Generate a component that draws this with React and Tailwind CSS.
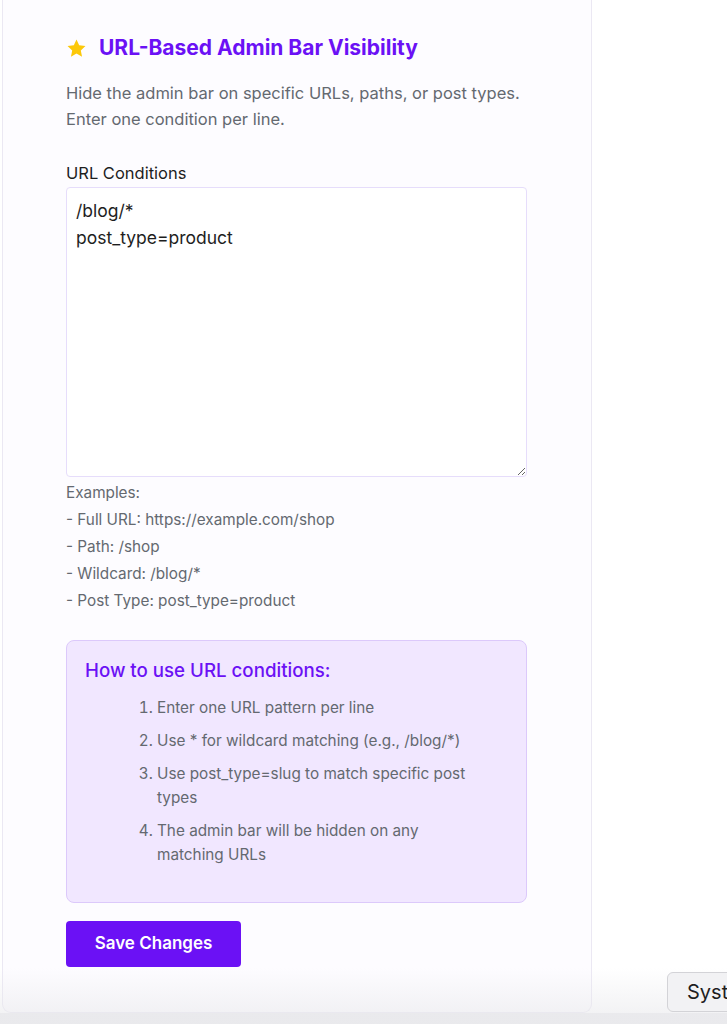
import React from 'react';

const Star = () => (
  <svg viewBox="0 0 24 24" className="w-[21px] h-[21px]">
    <path
      d="M12 1.8l3.05 6.6 7.2.85-5.33 4.93 1.42 7.12L12 17.7l-6.34 3.6 1.42-7.12L1.75 9.25l7.2-.85z"
      fill="#fcc80a"
    />
  </svg>
);

const examples = [
  'Examples:',
  '- Full URL: https://example.com/shop',
  '- Path: /shop',
  '- Wildcard: /blog/*',
  '- Post Type: post_type=product',
];

const steps = [
  'Enter one URL pattern per line',
  'Use * for wildcard matching (e.g., /blog/*)',
  'Use post_type=slug to match specific post types',
  'The admin bar will be hidden on any matching URLs',
];

const App = () => {
  return (
    <div className="relative w-[727px] h-[1024px] overflow-hidden bg-white font-['Inter',sans-serif]">
      <div className="flex h-[1013px]">
        <div className="ml-[2px] w-[590px] bg-[#fdfcff] border-x border-b border-[#ebe8f3] rounded-b-[9px] pl-[63px] pt-[34px]">
          <div className="w-[461px]">
            <h2 className="flex items-center gap-[12px] text-[21px] leading-[28px] font-bold text-[#6b11f5]">
              <Star />
              URL-Based Admin Bar Visibility
            </h2>

            <p className="mt-[18px] text-[16.5px] leading-[26px] text-[#646970]">
              Hide the admin bar on specific URLs, paths, or post types. Enter one condition per line.
            </p>

            <label className="block mt-[30px] text-[16.5px] leading-[22px] text-[#1e1e1e]">
              URL Conditions
            </label>

            <textarea
              className="block mt-[3px] w-full h-[290px] border border-[#e6ddfb] rounded-[4px] bg-white px-[9px] py-[9px] text-[17.5px] leading-[27px] text-[#1e1e1e] outline-none resize-y"
              defaultValue={'/blog/*\npost_type=product'}
            />

            <div className="mt-[2px] text-[15.3px] leading-[27px] text-[#646970]">
              {examples.map((line) => (
                <div key={line}>{line}</div>
              ))}
            </div>

            <div className="mt-[26px] h-[263px] bg-[#f1e7ff] border border-[#dcc9fb] rounded-[8px] px-[18px] pt-[18px]">
              <h3 className="text-[18.7px] leading-[24px] font-medium text-[#6b11f5]">
                How to use URL conditions:
              </h3>
              <ol className="mt-[13px] list-decimal pl-[72px] pr-[30px] text-[15.3px] leading-[24px] text-[#646970]">
                {steps.map((step) => (
                  <li key={step} className="mb-[9px]">
                    {step}
                  </li>
                ))}
              </ol>
            </div>

            <button className="mt-[18px] h-[46px] w-[175px] rounded-[4px] bg-[#6b11f5] text-white text-[17px] font-semibold">
              Save Changes
            </button>
          </div>
        </div>
      </div>
      <div className="h-[11px] bg-[#ebebee]" />

      <div className="pointer-events-none absolute left-0 right-0 top-[968px] h-[56px] bg-gradient-to-b from-transparent to-[#e9e9ec]/70" />

      <div className="absolute left-[667px] top-[972px] w-[90px] h-[40px] bg-[#f2f2f4] border border-[#d3d3d7] rounded-[6px] pl-[19px] flex items-center text-[20px] text-[#1e1e1e]">
        System
      </div>
    </div>
  );
};

export default App;
